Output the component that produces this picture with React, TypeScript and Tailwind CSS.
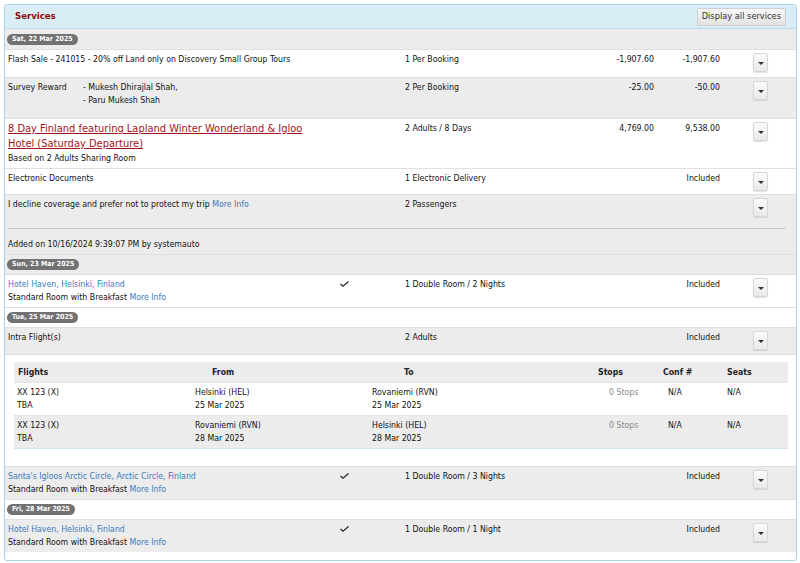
import type { ReactNode } from 'react';
import clsx from 'clsx';

const GRAY = 'bg-[#ececec]';
const WHITE = 'bg-white';

function DateBadge({ label }: { label: string }) {
  return (
    <span className="inline-flex items-center h-[11px] px-[5px] rounded-full bg-[#727272] text-white font-bold text-[7px] leading-none">
      {label}
    </span>
  );
}

function DateRow({ label, bg, first }: { label: string; bg: string; first?: boolean }) {
  return (
    <div className={clsx('flex items-center h-[20px] pl-[2px]', bg, !first && 'border-t border-[#e0e0e0]')}>
      <DateBadge label={label} />
    </div>
  );
}

function DropButton() {
  return (
    <div className="w-[15px] h-[19px] flex items-center justify-center rounded-[2px] border border-[#d6d6d6] bg-gradient-to-b from-[#fbfbfb] to-[#e9e9e9] shadow-[0_1px_1px_rgba(0,0,0,0.12)]">
      <span className="mt-[2px] w-0 h-0 border-l-[3px] border-r-[3px] border-t-[3px] border-l-transparent border-r-transparent border-t-[#333]" />
    </div>
  );
}

function Check() {
  return (
    <svg width="9" height="6" viewBox="0 0 9 6" className="mt-[3px] ml-[2px]">
      <polyline points="0.5,3 3,5.2 8.5,0.5" fill="none" stroke="#222" strokeWidth="1.2" />
    </svg>
  );
}

function MoreInfo() {
  return <span className="text-[#3b7bbf]"> More Info</span>;
}

interface RowProps {
  desc: ReactNode;
  check?: boolean;
  qty: string;
  unit?: string;
  total?: string;
  bg: string;
  h: string;
  button?: boolean;
}

function ServiceRow({ desc, check, qty, unit, total, bg, h, button = true }: RowProps) {
  return (
    <div className={clsx('flex items-start pl-[3px] pt-[3px] border-t border-[#e0e0e0]', bg, h)}>
      <div className="w-[330px]">{desc}</div>
      <div className="w-[67px]">{check && <Check />}</div>
      <div className="w-[190px]">{qty}</div>
      <div className="w-[59px] text-right">{unit}</div>
      <div className="w-[66px] text-right">{total}</div>
      <div className="w-[33px]" />
      {button && <DropButton />}
    </div>
  );
}

function HotelDesc({ name }: { name: string }) {
  return (
    <div>
      <div className="text-[#3b7bbf]">{name}</div>
      <div>
        Standard Room with Breakfast
        <MoreInfo />
      </div>
    </div>
  );
}

const flights = [
  { no: 'XX 123 (X)', from: 'Helsinki (HEL)', to: 'Rovaniemi (RVN)', date: '25 Mar 2025', bg: WHITE },
  { no: 'XX 123 (X)', from: 'Rovaniemi (RVN)', to: 'Helsinki (HEL)', date: '28 Mar 2025', bg: GRAY },
];

function FlightTable() {
  const cols = 'grid grid-cols-[176px_177px_226px_65px_64px_66px]';
  return (
    <div className="bg-white h-[112px] border-t border-[#e0e0e0] pt-[7px]">
      <div className="ml-[9px] w-[774px] border-b border-[#cfe6f2]">
        <div className={clsx(cols, 'h-[20px] items-center bg-[#ececec] font-bold text-[#222]')}>
          <div className="pl-[4px]">Flights</div>
          <div className="pl-[22px]">From</div>
          <div className="pl-[37px]">To</div>
          <div className="pl-[5px]">Stops</div>
          <div className="pl-[5px]">Conf #</div>
          <div className="pl-[5px]">Seats</div>
        </div>
        {flights.map((f, i) => (
          <div key={i} className={clsx(cols, 'h-[33px] pt-[3px] leading-[12.5px] border-t border-[#e4e4e4]', f.bg)}>
            <div className="pl-[3px]">
              <div>{f.no}</div>
              <div>TBA</div>
            </div>
            <div className="pl-[5px]">
              <div>{f.from}</div>
              <div>{f.date}</div>
            </div>
            <div className="pl-[5px]">
              <div>{f.to}</div>
              <div>{f.date}</div>
            </div>
            <div className="pl-[16px] text-[#8a8a8a]">0 Stops</div>
            <div className="pl-[10px]">N/A</div>
            <div className="pl-[5px]">N/A</div>
          </div>
        ))}
      </div>
    </div>
  );
}

export default function App() {
  return (
    <div className="bg-white min-h-[563px] pt-[4px] pl-[4px] pr-[3px] font-['Tahoma','DejaVu_Sans_Condensed','Liberation_Sans',sans-serif] text-[8.7px] leading-[12.5px] text-[#111]">
      <div className="border border-[#aad3ea] rounded-[3px] overflow-hidden h-[557px]">
        <div className="h-[24px] flex items-center justify-between pl-[10px] pr-[10px] bg-[#d9edf7] border-b border-[#b9dcee]">
          <span className="font-bold text-[9.5px] text-[#8b0a0a]">Services</span>
          <button className="h-[18px] px-[4px] rounded-[2px] border border-[#cfcfcf] bg-gradient-to-b from-[#f7f7f7] to-[#e2e2e2] text-[9.2px] text-[#333]">
            Display all services
          </button>
        </div>

        <DateRow label="Sat, 22 Mar 2025" bg={GRAY} first />
        <ServiceRow
          bg={WHITE}
          h="h-[28px]"
          desc="Flash Sale - 241015 - 20% off Land only on Discovery Small Group Tours"
          qty="1 Per Booking"
          unit="-1,907.60"
          total="-1,907.60"
        />
        <ServiceRow
          bg={GRAY}
          h="h-[41px]"
          desc={
            <div className="flex">
              <span className="w-[75px]">Survey Reward</span>
              <div>
                <div>- Mukesh Dhirajlal Shah,</div>
                <div>- Paru Mukesh Shah</div>
              </div>
            </div>
          }
          qty="2 Per Booking"
          unit="-25.00"
          total="-50.00"
        />
        <div className={clsx('flex items-start pl-[3px] pt-[2px] border-t border-[#e0e0e0] h-[50px]', WHITE)}>
          <div className="w-[397px]">
            <a className="block w-[305px] text-[11px] leading-[15px] text-[#a3141c] underline">
              8 Day Finland featuring Lapland Winter Wonderland &amp; Igloo Hotel (Saturday Departure)
            </a>
            <div className="mt-[1px]">Based on 2 Adults Sharing Room</div>
          </div>
          <div className="w-[190px] pt-[1px]">2 Adults / 8 Days</div>
          <div className="w-[59px] pt-[1px] text-right">4,769.00</div>
          <div className="w-[66px] pt-[1px] text-right">9,538.00</div>
          <div className="w-[33px]" />
          <div className="pt-[1px]">
            <DropButton />
          </div>
        </div>
        <ServiceRow bg={WHITE} h="h-[26px]" desc="Electronic Documents" qty="1 Electronic Delivery" total="Included" />
        <ServiceRow
          bg={GRAY}
          h="h-[34px]"
          desc={
            <span>
              I decline coverage and prefer not to protect my trip
              <MoreInfo />
            </span>
          }
          qty="2 Passengers"
        />
        <div className={clsx('h-[26px] px-[3px]', GRAY)}>
          <div className="border-t border-[#c9c9c9] w-[778px] pt-[9px]">Added on 10/16/2024 9:39:07 PM by systemauto</div>
        </div>

        <DateRow label="Sun, 23 Mar 2025" bg={GRAY} />
        <ServiceRow
          bg={WHITE}
          h="h-[33px]"
          desc={<HotelDesc name="Hotel Haven, Helsinki, Finland" />}
          check
          qty="1 Double Room / 2 Nights"
          total="Included"
        />

        <DateRow label="Tue, 25 Mar 2025" bg={WHITE} />
        <ServiceRow bg={GRAY} h="h-[27px]" desc="Intra Flight(s)" qty="2 Adults" total="Included" />
        <FlightTable />
        <ServiceRow
          bg={GRAY}
          h="h-[33px]"
          desc={<HotelDesc name="Santa's Igloos Arctic Circle, Arctic Circle, Finland" />}
          check
          qty="1 Double Room / 3 Nights"
          total="Included"
        />

        <DateRow label="Fri, 28 Mar 2025" bg={WHITE} />
        <ServiceRow
          bg={GRAY}
          h="h-[33px]"
          desc={<HotelDesc name="Hotel Haven, Helsinki, Finland" />}
          check
          qty="1 Double Room / 1 Night"
          total="Included"
        />
      </div>
    </div>
  );
}
